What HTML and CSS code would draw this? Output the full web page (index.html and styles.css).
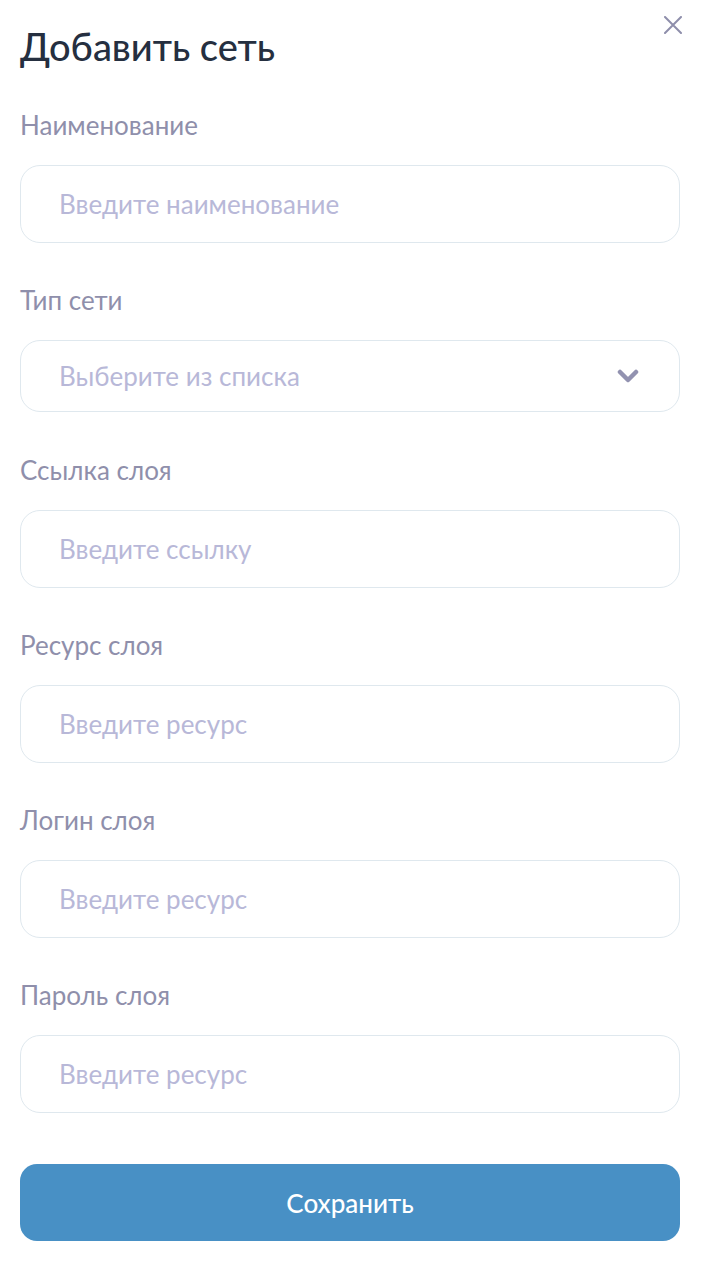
FILE: index.html
```html
<!DOCTYPE html>
<html lang="ru">
<head>
    <meta charset="UTF-8">
    <meta name="viewport" content="width=device-width, initial-scale=1.0">
    <title>Добавить сеть</title>
    <link rel="stylesheet" href="styles.css">
</head>
<body>
    <div class="modal">
        <div class="modal-header">
            <h1>Добавить сеть</h1>
            <button class="close" aria-label="Закрыть">
                <svg width="18" height="18" viewBox="0 0 18 18">
                    <path d="M1 1 L17 17 M17 1 L1 17" stroke="#8e8eab" stroke-width="2" stroke-linecap="round" fill="none"/>
                </svg>
            </button>
        </div>

        <form class="form">
            <div class="field">
                <label for="name">Наименование</label>
                <input type="text" id="name" placeholder="Введите наименование">
            </div>
            <div class="field">
                <label>Тип сети</label>
                <div class="select">
                    <span>Выберите из списка</span>
                    <svg width="22" height="14" viewBox="0 0 22 14">
                        <path d="M3 3 L11 11 L19 3" stroke="#9292b0" stroke-width="4.5" stroke-linecap="round" stroke-linejoin="round" fill="none"/>
                    </svg>
                </div>
            </div>
            <div class="field">
                <label for="url">Ссылка слоя</label>
                <input type="text" id="url" placeholder="Введите ссылку">
            </div>
            <div class="field">
                <label for="resource">Ресурс слоя</label>
                <input type="text" id="resource" placeholder="Введите ресурс">
            </div>
            <div class="field">
                <label for="login">Логин слоя</label>
                <input type="text" id="login" placeholder="Введите ресурс">
            </div>
            <div class="field">
                <label for="password">Пароль слоя</label>
                <input type="text" id="password" placeholder="Введите ресурс">
            </div>
            <button type="button" class="save">Сохранить</button>
        </form>
    </div>
</body>
</html>
```

FILE: styles.css
```css
body {
    font-family: Lato, "Open Sans", sans-serif;
    margin: 0;
    background: #fff;
    color: #252f40;
}

.modal {
    padding: 0 20px;
}

.modal-header {
    display: flex;
    justify-content: space-between;
    align-items: flex-start;
    padding-top: 24px;
}

h1 {
    margin: 0;
    font-size: 38px;
    line-height: 44px;
    font-weight: 500;
    color: #252f40;
}

.close {
    background: none;
    border: none;
    padding: 0;
    margin-top: -8px;
    width: 18px;
    height: 18px;
    cursor: pointer;
    display: flex;
}

.form {
    display: flex;
    flex-direction: column;
    margin-top: 43px;
    margin-right: 2px;
}

.field {
    display: flex;
    flex-direction: column;
    margin-bottom: 43px;
}

.field label {
    font-size: 26px;
    line-height: 28px;
    color: #8f8fab;
    margin-bottom: 26px;
}

.field input,
.select {
    box-sizing: border-box;
    width: 100%;
    height: 78px;
    border: 1px solid #dfe8ee;
    border-radius: 20px;
    padding: 0 40px 0 38px;
    font-family: inherit;
    font-size: 26px;
    color: #252f40;
    background: #fff;
    outline: none;
}

.field input::placeholder {
    color: #b8b8d8;
}

.select {
    height: 72px;
    display: flex;
    align-items: center;
    justify-content: space-between;
    color: #b8b8d8;
    cursor: pointer;
}

.form .field:nth-child(2) {
    margin-bottom: 44px;
}

.form .field:last-of-type {
    margin-bottom: 51px;
}

.save {
    height: 77px;
    border: none;
    border-radius: 17px;
    background: #4890c5;
    color: #fff;
    font-family: inherit;
    font-size: 26px;
    font-weight: 500;
    cursor: pointer;
}
```
